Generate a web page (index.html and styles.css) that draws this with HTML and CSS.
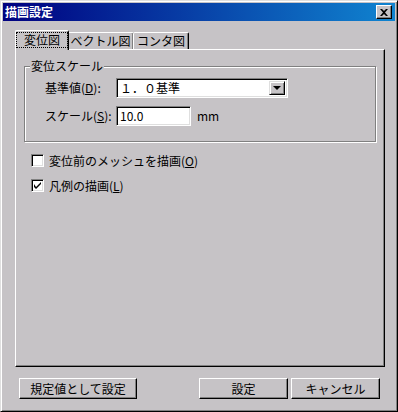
FILE: index.html
```html
<!DOCTYPE html>
<html lang="ja">
<head>
    <meta charset="UTF-8">
    <title>描画設定</title>
    <link rel="stylesheet" href="styles.css">
</head>
<body>
    <div class="window">
        <div class="titleBar">
            <span class="titleText">描画設定</span>
            <span class="closeBtn">
                <svg width="8" height="7" viewBox="0 0 8 7"><path d="M0 0h2l2 2 2-2h2L5 3.5 8 7H6L4 5 2 7H0l3-3.5z" fill="#000"/></svg>
            </span>
        </div>
        <div class="content">
            <div class="tabRow">
                <div class="tab tabSelected"><span class="focusBox">変位図</span></div>
                <div class="tab tabVector">ベクトル図</div>
                <div class="tab tabContour">コンタ図</div>
            </div>
            <div class="tabPanel">
                <fieldset class="groupBox">
                    <legend>変位スケール</legend>
                    <div class="formRow">
                        <label>基準値(<u>D</u>):</label>
                        <div class="selectBox">
                            <span class="selectText">１．０基準</span>
                            <span class="dropBtn"><span class="arrow"></span></span>
                        </div>
                    </div>
                    <div class="formRow">
                        <label>スケール(<u>S</u>):</label>
                        <div class="textBox">10.0</div>
                        <span class="unit">mm</span>
                    </div>
                </fieldset>
                <div class="checkRow">
                    <span class="checkBox"></span>
                    <span>変位前のメッシュを描画(<u>O</u>)</span>
                </div>
                <div class="checkRow">
                    <span class="checkBox">
                        <svg width="7" height="7" viewBox="0 0 7 7"><path d="M0 2v3l2 2 5-5V0L2 5z" fill="#000"/></svg>
                    </span>
                    <span>凡例の描画(<u>L</u>)</span>
                </div>
            </div>
            <div class="buttonRow">
                <div class="btn btnDefault">規定値として設定</div>
                <div class="btn btnOk">設定</div>
                <div class="btn btnCancel">キャンセル</div>
            </div>
        </div>
    </div>
</body>
</html>
```

FILE: styles.css
```css
body {
    margin: 0;
    padding: 0;
    background-color: #c6c3c6;
    font-family: "Noto Sans CJK JP", "Liberation Sans", sans-serif;
    font-size: 12px;
    color: #000;
}
.window {
    width: 398px;
    height: 412px;
    box-sizing: border-box;
    border: 1px solid;
    border-color: #dfdfdf #000 #000 #dfdfdf;
    box-shadow: inset 1px 1px #fff, inset -1px -1px #808080;
    padding: 2px;
    background-color: #c6c3c6;
}
.titleBar {
    height: 18px;
    display: flex;
    align-items: center;
    justify-content: space-between;
    padding: 0 3px 0 2px;
    background: linear-gradient(to right, #000080, #1084d0);
}
.titleText {
    color: #fff;
    font-weight: bold;
    line-height: 18px;
}
.closeBtn {
    width: 16px;
    height: 14px;
    box-sizing: border-box;
    display: flex;
    align-items: center;
    justify-content: center;
    background-color: #c6c3c6;
    border: 1px solid;
    border-color: #fff #000 #000 #fff;
    box-shadow: inset -1px -1px #808080;
}
.content {
    padding: 9px 0 0 12px;
}
.tabRow {
    display: flex;
    align-items: flex-end;
    height: 19px;
    padding-left: 2px;
    position: relative;
    z-index: 1;
}
.tab {
    height: 17px;
    box-sizing: border-box;
    border: 1px solid;
    border-color: #fff #000 transparent #fff;
    border-bottom: none;
    border-radius: 2px 2px 0 0;
    box-shadow: inset -1px 0 #808080;
    text-align: center;
    line-height: 16px;
    background-color: #c6c3c6;
}
.tabSelected {
    width: 54px;
    height: 20px;
    margin: 0 -2px -1px -2px;
    padding-top: 2px;
    position: relative;
    z-index: 2;
}
.focusBox {
    display: block;
    margin: 0 1px;
    outline: 1px dotted #000;
    line-height: 14px;
}
.tabVector {
    width: 67px;
}
.tabContour {
    width: 56px;
    margin-left: -1px;
}
.tabPanel {
    width: 370px;
    height: 318px;
    box-sizing: border-box;
    border: 1px solid;
    border-color: #fff #000 #000 #fff;
    box-shadow: inset -1px -1px #808080;
    padding: 10px 0 0 8px;
}
.groupBox {
    width: 352px;
    height: 82px;
    box-sizing: border-box;
    margin: 0;
    padding: 5px 0 0 0;
    border: 1px solid #808080;
    box-shadow: inset 1px 1px #fff, 1px 1px #fff;
}
.groupBox legend {
    margin-left: 5px;
    padding: 0 1px;
    line-height: 12px;
    background-color: #c6c3c6;
}
.formRow {
    display: flex;
    align-items: center;
    height: 21px;
    margin-bottom: 7px;
    padding-left: 20px;
}
.formRow label {
    width: 71px;
}
.selectBox {
    width: 172px;
    height: 20px;
    box-sizing: border-box;
    border: 1px solid;
    border-color: #808080 #fff #fff #808080;
    box-shadow: inset 1px 1px #000, inset -1px -1px #dfdfdf;
    background-color: #fff;
    display: flex;
    align-items: center;
    justify-content: space-between;
    padding: 0 2px 0 3px;
}
.selectText {
    line-height: 16px;
}
.dropBtn {
    width: 16px;
    height: 14px;
    box-sizing: border-box;
    border: 1px solid;
    border-color: #dfdfdf #000 #000 #dfdfdf;
    box-shadow: inset 1px 1px #fff, inset -1px -1px #808080;
    background-color: #c6c3c6;
    display: flex;
    align-items: center;
    justify-content: center;
}
.arrow {
    width: 0;
    height: 0;
    border-left: 4px solid transparent;
    border-right: 4px solid transparent;
    border-top: 4px solid #000;
}
.textBox {
    width: 75px;
    height: 20px;
    box-sizing: border-box;
    border: 1px solid;
    border-color: #808080 #fff #fff #808080;
    box-shadow: inset 1px 1px #000, inset -1px -1px #dfdfdf;
    background-color: #fff;
    padding-left: 3px;
    line-height: 18px;
}
.unit {
    margin-left: 6px;
}
.checkRow {
    display: flex;
    align-items: center;
    gap: 5px;
    height: 13px;
    margin-left: 7px;
    margin-top: 12px;
}
.checkBox {
    width: 13px;
    height: 13px;
    box-sizing: border-box;
    border: 1px solid;
    border-color: #808080 #fff #fff #808080;
    box-shadow: inset 1px 1px #000, inset -1px -1px #dfdfdf;
    background-color: #fff;
    display: flex;
    align-items: center;
    justify-content: center;
}
.buttonRow {
    display: flex;
    margin-top: 11px;
    padding-left: 4px;
}
.btn {
    height: 21px;
    box-sizing: border-box;
    border: 1px solid;
    border-color: #fff #000 #000 #fff;
    box-shadow: inset -1px -1px #808080;
    text-align: center;
    line-height: 19px;
}
.btnDefault {
    width: 118px;
}
.btnOk {
    width: 89px;
    margin-left: 62px;
}
.btnCancel {
    width: 89px;
    margin-left: 3px;
}
```
